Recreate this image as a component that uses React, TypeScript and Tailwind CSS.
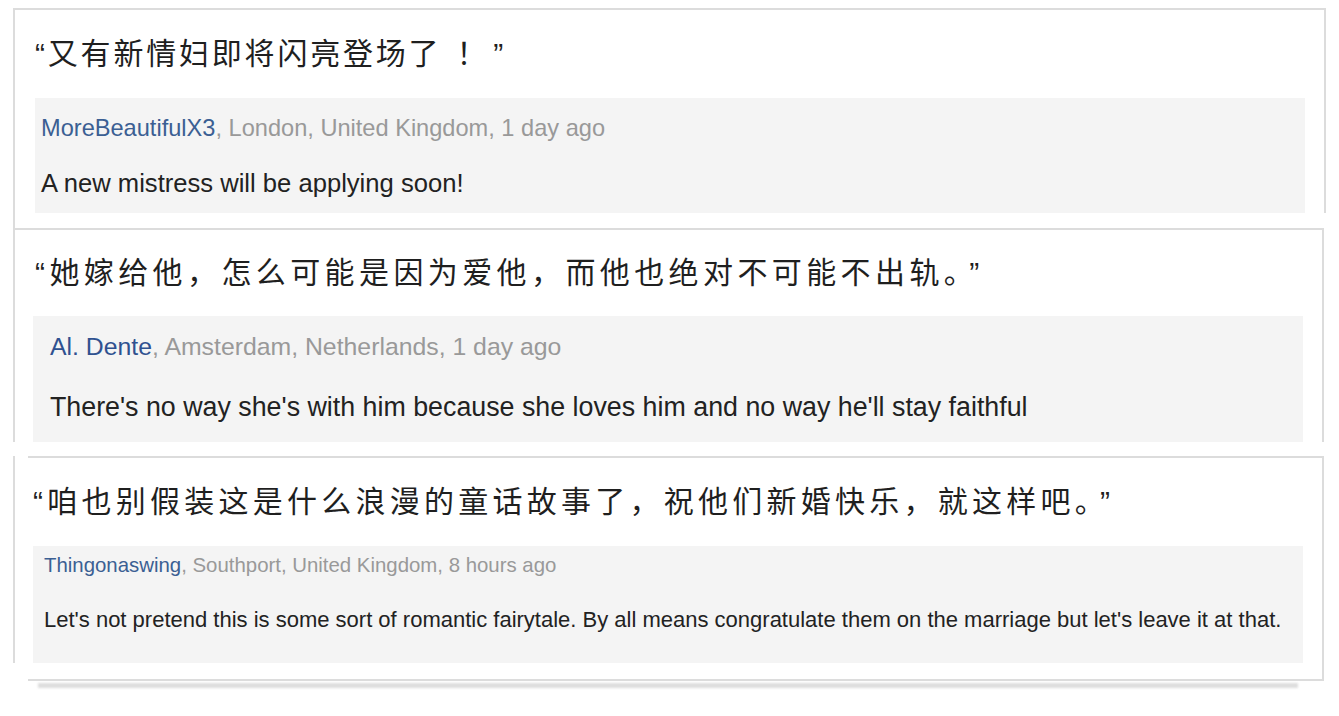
const sans = "font-['Liberation_Sans','Noto_Sans_CJK_SC',sans-serif]";

const Quote = ({ children, className }: { children: React.ReactNode; className: string }) => (
  <p className={`${sans} text-[30px] leading-none text-[#1f1f1f] ${className}`}>
    “{children}
  </p>
);

const App = () => {
  return (
    <div className={`min-h-screen bg-white pt-[8px] ${sans}`}>
      {/* card 1 */}
      <div className="ml-[13px] w-[1313px] border-x-2 border-t-2 border-[#dcdcdc]">
        <div className="flex h-[88px] items-center pl-[20px]">
          <Quote className="tracking-[2.8px]">
            又有新情妇即将闪亮登场了<span className="ml-[15px]">！</span>
            <span className="ml-[4px]">”</span>
          </Quote>
        </div>
        <div className="ml-[20px] flex h-[115px] w-[1270px] flex-col bg-[#f4f4f4] pl-[6px]">
          <p className="mt-[18px] text-[23.6px] leading-[24px] text-[#999]">
            <span className="text-[#3b5f93]">MoreBeautifulX3</span>, London, United Kingdom, 1 day ago
          </p>
          <p className="mt-[30px] text-[25.6px] leading-[26px] text-[#222]">
            A new mistress will be applying soon!
          </p>
        </div>
      </div>
      <div className="ml-[13px] h-[15px] border-l-2 border-[#dcdcdc]" />

      {/* card 2 */}
      <div className="ml-[13px] w-[1311px] border-x-2 border-t-2 border-[#dcdcdc]">
        <div className="flex h-[86px] items-center pl-[20px]">
          <Quote className="tracking-[4.4px]">
            她嫁给他，怎么可能是因为爱他，而他也绝对不可能不出轨。
            <span className="ml-[6px]">”</span>
          </Quote>
        </div>
        <div className="ml-[18px] flex h-[126px] w-[1270px] flex-col bg-[#f4f4f4] pl-[17px]">
          <p className="mt-[19px] text-[24.8px] leading-[24px] text-[#999]">
            <span className="text-[#2f5190]">Al. Dente</span>, Amsterdam, Netherlands, 1 day ago
          </p>
          <p className="mt-[35px] text-[26.8px] leading-[26px] text-[#222]">
            There's no way she's with him because she loves him and no way he'll stay faithful
          </p>
        </div>
      </div>

      {/* card 3 */}
      <div className="mt-[14px] ml-[13px] flex">
        <div className="h-[207px] w-[2px] bg-[#dcdcdc]" />
        <div className="ml-[13px] flex flex-col">
          <div className="w-[1296px] border-t-2 border-r-2 border-b-2 border-[#dcdcdc] pb-[16px]">
            <div className="-ml-[15px] flex h-[88px] items-center pl-[20px]">
              <Quote className="tracking-[4.25px]">
                咱也别假装这是什么浪漫的童话故事了，祝他们新婚快乐，就这样吧。
                <span className="ml-[6px]">”</span>
              </Quote>
            </div>
            <div className="ml-[5px] flex h-[117px] w-[1270px] flex-col bg-[#f4f4f4] pl-[11px]">
              <p className="mt-[9px] text-[20.4px] leading-[20px] text-[#999]">
                <span className="text-[#3b5f93]">Thingonaswing</span>, Southport, United Kingdom, 8 hours ago
              </p>
              <p className="mt-[34px] text-[22px] leading-[22px] text-[#222]">
                Let's not pretend this is some sort of romantic fairytale. By all means congratulate them on the marriage but let's leave it at that.
              </p>
            </div>
          </div>
          <div className="ml-[10px] mt-[2px] h-[5px] w-[1260px] bg-[#dedede] blur-[1px]" />
        </div>
      </div>
    </div>
  );
};

export default App;
